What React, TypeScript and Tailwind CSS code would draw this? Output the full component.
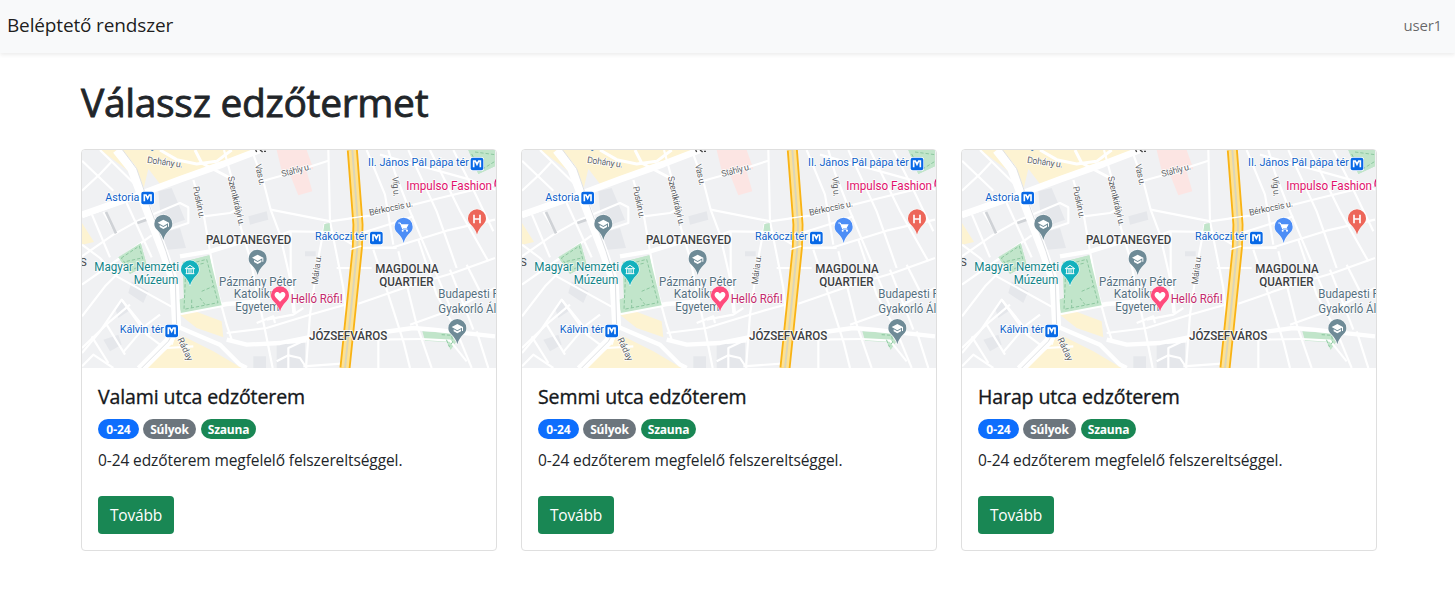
import React from "react";

const gyms = ["Valami utca edzőterem", "Semmi utca edzőterem", "Harap utca edzőterem"];

const minorRoads = [
  "M6 38 L100 128", "M60 6 L186 130", "M6 128 L60 78 L96 40", "M36 200 L90 328", "M140 165 L215 328",
  "M70 192 L110 258", "M6 325 L100 260 L180 215 L300 165 L325 178 L325 225 L250 250", "M6 410 L120 330 L215 262",
  "M6 290 L60 330 L110 385 L300 490", "M6 505 L75 415 L140 350", "M6 615 L60 550 L125 455 L210 560", "M125 455 L200 560 L240 590",
  "M6 600 L90 520 L150 470", "M80 530 L135 620", "M35 565 L85 645", "M130 612 L200 530 L240 500", "M6 655 L40 620 L100 660",
  "M340 96 L372 205 L390 310 L410 420 L440 530 L455 575", "M432 6 L455 90 L480 230 L510 330 L535 450 L560 570 L578 660",
  "M515 6 L550 100 L572 185 L600 260 L632 400 L640 495", "M372 205 L450 195 L480 180", "M545 100 L615 80 L745 38",
  "M572 185 L752 220", "M745 6 L750 220 L790 420 L800 525", "M735 225 L715 330 L690 500 L678 660", "M600 260 L630 250 L755 252",
  "M632 250 L632 370 L645 495", "M750 220 L870 203 L1080 150 L1245 110", "M755 252 L835 300 L950 300", "M845 255 L950 222 L1000 205",
  "M820 300 L940 298 L1100 248 L1245 215", "M860 6 L915 140 L940 290", "M925 6 L945 75 L990 190 L1045 320 L1120 500",
  "M985 6 L1070 190 L1130 360", "M1050 6 L1140 190 L1225 340", "M1120 6 L1175 115 L1240 250", "M900 20 L1170 95 L1245 125",
  "M880 305 L925 440 L970 580 L990 660", "M955 310 L1010 530 L1055 660", "M1015 275 L1070 440 L1130 550 L1175 660",
  "M770 360 L875 360", "M835 467 L1000 410 L1120 375 L1245 330", "M990 530 L1130 480 L1245 420", "M890 575 L1025 573",
  "M895 555 L895 660", "M1025 573 L1110 578 L1160 640", "M1190 550 L1225 660", "M1110 365 L1180 545", "M1160 350 L1200 430",
  "M440 555 L560 540 L690 500 L795 470", "M560 515 L640 500 L670 480", "M620 585 L680 580", "M590 640 L625 622 L660 630 L680 660",
  "M670 655 L795 646", "M530 525 L580 505 L585 525", "M700 565 L625 600 L625 660", "M190 655 L260 600 L340 595", "M290 540 L275 590",
];
const roads = [
  "M6 205 L180 140 L300 94 L430 48 L540 6", "M300 495 L440 468 L540 460", "M300 325 L390 310 L505 275",
  "M290 535 L420 590 L480 650 L500 660", "M440 575 L500 590 L600 585 L700 565 L890 555 L1000 540 L1060 545 L1245 565",
];
const yellowAreaRoads = ["M345 6 L365 45 L450 90", "M240 6 L290 35 L350 48 L410 40 L455 6"];
const labelWhite = "stroke-white [paint-order:stroke] [stroke-width:4px]";

function Metro({ x, y }: { x: number; y: number }) {
  return (
    <g transform={`translate(${x} ${y})`}>
      <rect x="-21" y="-21" width="42" height="42" rx="8" fill="#fff" />
      <rect x="-19" y="-19" width="38" height="38" rx="6" fill="#0869e6" />
      <path d="M-10 10V-9H-5L0 1L5-9H10V10" fill="none" stroke="#fff" strokeWidth="5" />
    </g>
  );
}

function Pin({ x, y, color, children }: { x: number; y: number; color: string; children: React.ReactNode }) {
  return (
    <g transform={`translate(${x} ${y})`}>
      <path d="M0 47C-3 34-9 27-18 17C-25 10-27 5-27-2A27 27 0 0 1 27-2C27 5 25 10 18 17C9 27 3 34 0 47Z" fill={color} stroke="#fff" strokeWidth="3" className="[paint-order:stroke]" />
      {children}
    </g>
  );
}

function School({ x, y }: { x: number; y: number }) {
  return (
    <Pin x={x} y={y} color="#6f8b97">
      <path d="M-17-5L0-14L17-5V7H14V-3L0 5Z" fill="#fff" />
      <path d="M-11 2L0 8L11 2V8L0 14L-11 8Z" fill="#fff" />
    </Pin>
  );
}

function Street({ x, y, angle, width, children }: { x: number; y: number; angle: number; width: number; children: string }) {
  return (
    <text x={x} y={y} transform={`rotate(${angle} ${x} ${y})`} textLength={width} fontSize="27" fill="#5c6064" className={labelWhite}>
      {children}
    </text>
  );
}

function Label({ x, y, width, color, size = 36, bold = false, children }: { x: number; y: number; width: number; color: string; size?: number; bold?: boolean; children: string }) {
  return (
    <text x={x} y={y} textLength={width} lengthAdjust="spacingAndGlyphs" fontSize={size} fill={color} fontWeight={bold ? 500 : 400} className={labelWhite}>
      {children}
    </text>
  );
}

function CityMap() {
  return (
    <svg viewBox="6 6 1242 654" className="block h-[218px] w-full rounded-t-[3px] font-[Roboto,sans-serif]">
      <rect x="6" y="6" width="1242" height="654" fill="#f0f1f3" />
      <g fill="#e5e7eb">
        <path d="M235 130L275 120L315 215L245 240ZM245 255L300 240L318 300L262 305ZM505 205L560 190L565 215L510 230ZM675 310H707V325H675ZM520 625H558V660H520ZM590 590L675 580V660H590ZM105 480L125 460L145 490L115 510ZM70 575L115 560L125 590L90 610ZM155 400L205 430L190 465L145 435Z" />
      </g>
      <g fill="#fdf3d2">
        <path d="M62 6H515L455 38L300 92L240 108L205 62L190 125L140 65ZM6 225L42 282L6 290ZM300 500L345 490L425 520L430 568L350 540ZM185 655L240 590L310 565L400 610L485 660V665H190Z" />
      </g>
      <path d="M590 6H680L700 62L680 70L697 130L655 142L632 85L605 68Z" fill="#fce5e3" />
      <g fill="#c1e5ca">
        <path d="M115 328L182 285L200 350L150 378ZM308 342L388 322L425 472L302 495L298 455L312 450ZM1165 6H1245V55L1195 78ZM1027 550L1110 555L1128 582L1112 606L1100 582L1035 578Z" />
      </g>
      <g fill="none" stroke="#fff" strokeLinejoin="round">
        {minorRoads.map((d) => <path key={d} d={d} strokeWidth="6.5" />)}
        {yellowAreaRoads.map((d) => <path key={d} d={d} strokeWidth="9" />)}
        {roads.map((d) => <path key={d} d={d} strokeWidth="13" />)}
        <path d="M6 200L150 150L300 94L430 48L540 6" strokeWidth="20" />
      </g>
      <path d="M115 328L182 285L200 350L150 378ZM308 342L388 322L425 472L302 495L298 455L312 450ZM1165 6H1245V55L1195 78ZM733 228L749 225L751 250L730 250Z" fill="#c1e5ca" />
      <g fill="none" stroke="#8cc79f" strokeWidth="3" strokeDasharray="10 6">
        <path d="M124 330L178 294L192 348L152 368ZM140 340L185 330M318 350L380 334L414 464L312 484ZM330 355L375 345M365 430L400 415M335 455V480M360 450L375 470M1175 18L1200 68L1245 40M1185 12L1245 20M1085 560L1115 562L1118 582L1108 596L1098 572" />
      </g>
      <path d="M78 192L108 256M172 225L200 215" fill="none" stroke="#cfd2d6" strokeWidth="8" />
      <g fill="none" strokeLinejoin="round">
        <path d="M110 6L155 62L190 155L250 310L282 400L290 535L265 580L180 665" stroke="#fff" strokeWidth="27" />
        <path d="M128 6L170 62L202 155L258 310L286 400L290 535L265 580L180 665" stroke="#dfe1e4" strokeWidth="3" />
        <path d="M817 6L834 230L832 300L795 660" stroke="#f9b315" strokeWidth="33" />
        <path d="M817 6L834 230L832 300L795 660" stroke="#fde293" strokeWidth="22" />
        <path d="M817 6L834 230L832 300L795 660" stroke="#dcd5b8" strokeWidth="6" />
      </g>
      <path d="M803 212L848 205M810 305L844 294" stroke="#fff" strokeWidth="4" />

      <Street x={200} y={44} angle={8} width={108}>Dohány u.</Street>
      <Street x={338} y={117} angle={78} width={98}>Puskin u.</Street>
      <Street x={443} y={87} angle={77} width={152}>Szentkirályi u.</Street>
      <Street x={525} y={50} angle={77} width={65}>Vas u.</Street>
      <Street x={607} y={87} angle={-15} width={90}>Stáhly u.</Street>
      <Street x={937} y={86} angle={86} width={61}>Víg u.</Street>
      <Street x={869} y={203} angle={-12} width={134}>Bérkocsis u.</Street>
      <Street x={713} y={410} angle={-83} width={88}>Mária u.</Street>
      <Street x={292} y={574} angle={65} width={74}>Ráday</Street>
      <path d="M527 6L530 12M540 6L548 12M552 10H558" stroke="#444" strokeWidth="4" />
      <path d="M214 6H220" stroke="#1967c0" strokeWidth="5" />
      <text x="0" y="353" fontSize="34" fill="#444">S</text>

      <Label x={76} y={158} width={102} size={31} color="#0d5fc9">Astoria</Label>
      <Label x={119} y={555} width={133} size={31} color="#0d5fc9">Kálvin tér</Label>
      <Label x={705} y={276} width={158} size={31} color="#0d5fc9">Rákóczi tér</Label>
      <Label x={864} y={54} width={303} size={31} color="#0d5fc9">II. János Pál pápa tér</Label>
      <Label x={378} y={288} width={256} bold color="#3c4043">PALOTANEGYED</Label>
      <Label x={886} y={375} width={190} bold color="#3c4043">MAGDOLNA</Label>
      <Label x={898} y={414} width={163} bold color="#3c4043">QUARTIER</Label>
      <Label x={687} y={575} width={235} bold color="#3c4043">JÓZSEFVÁROS</Label>
      <Label x={43} y={369} width={254} color="#128488">Magyar Nemzeti</Label>
      <Label x={161} y={408} width={134} color="#128488">Múzeum</Label>
      <Label x={417} y={414} width={232} color="#557080">Pázmány Péter</Label>
      <Label x={461} y={451} width={146} color="#557080">Katolikus</Label>
      <Label x={466} y={489} width={132} color="#557080">Egyetem</Label>
      <Label x={1075} y={451} width={182} color="#557080">Budapesti F</Label>
      <Label x={1075} y={496} width={174} color="#557080">Gyakorló Ál</Label>
      <Label x={979} y={126} width={257} color="#e0116b">Impulso Fashion</Label>
      <Label x={632} y={465} width={156} color="#c2296b">Helló Röfi!</Label>
      <path d="M1249 94Q1243 102 1246 116" fill="none" stroke="#e0116b" strokeWidth="4" />

      <Metro x={203} y={150} />
      <Metro x={275} y={549} />
      <Metro x={889} y={270} />
      <Metro x={1191} y={48} />
      <School x={250} y={229} />
      <School x={533} y={334} />
      <School x={1132} y={542} />
      <Pin x={330} y={366} color="#13b1bd">
        <path d="M-14-4L0-14L14-4ZM-13 11H13M-10-3V10M-3-3V10M3-3V10M10-3V10" fill="none" stroke="#fff" strokeWidth="3" />
      </Pin>
      <Pin x={600} y={444} color="#ff4b7d">
        <path d="M0 17L-12 5C-24-8-7-19 0-7C7-19 24-8 12 5Z" fill="#fff" />
      </Pin>
      <Pin x={971} y={238} color="#4c8df6">
        <path d="M-16-13H-10L-3 5H11" fill="none" stroke="#fff" strokeWidth="3" />
        <path d="M-9-9H15L9 2H-4Z" fill="#fff" />
        <circle cx="-3" cy="10" r="3" fill="#fff" /><circle cx="10" cy="10" r="3" fill="#fff" />
      </Pin>
      <Pin x={1191} y={213} color="#ed6659">
        <path d="M-9-13V13M9-13V13M-9 0H9" fill="none" stroke="#fff" strokeWidth="5" />
      </Pin>
    </svg>
  );
}

function GymCard({ name }: { name: string }) {
  return (
    <article className="h-[402px] w-[416px] shrink-0 rounded border border-[#dfdfdf] bg-white">
      <CityMap />
      <div className="p-4">
        <h2 className="h-6 w-fit text-[19.5px] leading-[26px] tracking-[-0.1px] whitespace-nowrap text-[#15181b] [-webkit-text-stroke:0.35px]">{name}</h2>
        <div className="mt-[11px] flex h-5 gap-1 text-[12px] leading-[21px] font-bold text-white">
          <span className="w-[41px] rounded-full bg-[#0d6efd] text-center">0-24</span>
          <span className="mr-[1px] w-[53px] rounded-full bg-[#6c757d] text-center tracking-[-0.2px]">Súlyok</span>
          <span className="w-[55px] rounded-full bg-[#198754] text-center tracking-[-0.2px]">Szauna</span>
        </div>
        <p className="mt-[9px] w-fit text-[15.5px] leading-6 tracking-[-0.1px] whitespace-nowrap">0-24 edzőterem megfelelő felszereltséggel.</p>
        <button className="mt-6 h-[38px] w-[76px] rounded bg-[#198754] pt-[2px] text-[15.5px] tracking-[-0.2px] text-white">Tovább</button>
      </div>
    </article>
  );
}

export default function App() {
  return (
    <div className="min-h-[594px] overflow-hidden bg-white font-['Open_Sans','Noto_Sans',sans-serif] text-[#212529]">
      <header className="flex h-[53px] items-center justify-between bg-[#f8f9fa] pr-[13px] pb-[2px] pl-[7px] shadow-[0_2px_4px_rgba(0,0,0,0.075)]">
        <span className="text-[19px] tracking-[-0.15px] text-black/90">Beléptető rendszer</span>
        <span className="text-[15px] tracking-[-0.2px] text-black/60">user1</span>
      </header>
      <main className="px-[81px] pt-[25px]">
        <h1 className="h-[48px] w-fit text-[39px] leading-[48px] tracking-[-0.33px] [-webkit-text-stroke:0.8px]">Válassz edzőtermet</h1>
        <div className="mt-[23px] flex gap-6">
          {gyms.map((name) => <GymCard key={name} name={name} />)}
        </div>
      </main>
    </div>
  );
}
